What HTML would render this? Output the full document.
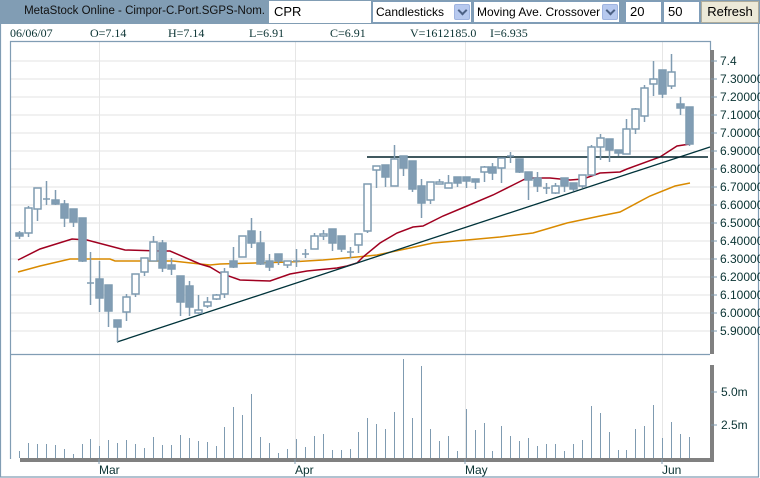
<!DOCTYPE html>
<html><head><meta charset="utf-8"><style>
*{margin:0;padding:0;box-sizing:border-box}
body{width:760px;height:478px;background:#fff;position:relative;overflow:hidden;font-family:"Liberation Sans",sans-serif}
.bar{position:absolute;left:0;top:0;width:760px;height:24px;background:#819db4}
.ttl{position:absolute;right:495px;top:5px;font-size:11.5px;color:#111;white-space:nowrap}
.box{position:absolute;top:1px;height:22px;background:#fff;border:1px solid #7f9db9;font-size:13px;padding:2px 4px;color:#000;white-space:nowrap;overflow:hidden}
.sel{font-size:12px;padding:3px 3px}
.arr{position:absolute;right:1px;top:2px;width:16px;height:16px;background:#b7c9ef;border:1px solid #a0b4e0;border-radius:2px}
.arr:after{content:"";position:absolute;left:4px;top:2px;width:5px;height:5px;border-right:2px solid #4d6185;border-bottom:2px solid #4d6185;transform:rotate(45deg)}
.btn{position:absolute;left:701px;top:1px;width:58px;height:22px;background:#ece9d8;border:1px solid #b0ad9c;font-size:13px;text-align:center;padding-top:2px}
.info{position:absolute;top:26px;font-family:"Liberation Serif",serif;font-size:12px;color:#0a3333;white-space:nowrap}
</style></head><body>
<div class="bar"></div>
<div class="ttl">MetaStock Online - Cimpor-C.Port.SGPS-Nom.</div>
<div class="box" style="left:269px;width:102px;border-color:#fff">CPR</div>
<div class="box sel" style="left:372px;width:100px">Candlesticks<div class="arr"></div></div>
<div class="box sel" style="left:473px;width:147px">Moving Ave. Crossover<div class="arr"></div></div>
<div class="box" style="left:625px;width:37px">20</div>
<div class="box" style="left:663px;width:37px">50</div>
<div class="btn">Refresh</div>
<div class="info" style="left:10px">06/06/07</div>
<div class="info" style="left:90px">O=7.14</div>
<div class="info" style="left:168px">H=7.14</div>
<div class="info" style="left:249px">L=6.91</div>
<div class="info" style="left:330px">C=6.91</div>
<div class="info" style="left:410px">V=1612185.0</div>
<div class="info" style="left:490px">I=6.935</div>
<svg id="s" width="760" height="478" style="position:absolute;left:0;top:0" xmlns="http://www.w3.org/2000/svg">
<g stroke="#e3e3e3" stroke-width="1" id="grid"></g>
<g stroke="#e6e6e6" stroke-width="1">
<line x1="99.5" y1="42" x2="99.5" y2="459"/><line x1="295.5" y1="42" x2="295.5" y2="459"/><line x1="465.5" y1="42" x2="465.5" y2="459"/><line x1="662.5" y1="42" x2="662.5" y2="459"/>
</g>
<g fill="none" stroke="#819db4" stroke-width="1.2">
<line x1="0.5" y1="24" x2="0.5" y2="477"/><line x1="758.5" y1="24" x2="758.5" y2="477"/><line x1="0" y1="477" x2="759" y2="477"/>
<polyline points="10.5,459 10.5,41.5 710.5,41.5 710.5,50"/>
<line x1="10" y1="354.5" x2="710" y2="354.5"/>
</g>
<g fill="#808080">
<rect x="710" y="50" width="4" height="304"/><rect x="710" y="365" width="4" height="96"/><rect x="20" y="458" width="694" height="4"/>
</g>
<g id="vol" stroke="#7f9bb1" stroke-width="1"></g>
<polyline fill="none" stroke="#d98a00" stroke-width="1.5" points="18,272 40,266 70,259 110,259 115,261 173,261 200,264 210,265 220,264 290,262 323,260 357,257 377,255 410,248 433,243 467,240 500,237 533,233 567,223 600,216 620,212 650,196 675,186 690,183"/>
<polyline fill="none" stroke="#a00020" stroke-width="1.5" points="18,260 40,249 72,239 87,240 125,250 160,251 170,251 200,264 210,267 220,273 240,280 270,281 290,274 307,271 337,268 347,266 357,263 363,257 380,243 397,233 413,227 423,226 443,216 467,206 493,195 513,185 527,178 550,178 570,180 583,179 600,173 620,172 627,169 660,157 677,146 690,144"/>
<line x1="117" y1="342" x2="710" y2="147" stroke="#00333a" stroke-width="1.3"/>
<line x1="367" y1="157" x2="708" y2="157" stroke="#00222a" stroke-width="1.5"/>
<g id="cd" stroke="#7f9bb1" stroke-width="1.5"></g>
<g font-family="Liberation Sans,sans-serif" font-size="12" fill="#0a3333" id="ax"></g>
<g stroke="#7f9bb1" stroke-width="1"><line x1="711" y1="392" x2="717" y2="392"/><line x1="711" y1="425" x2="717" y2="425"/><line x1="99" y1="459" x2="99" y2="464"/><line x1="295" y1="459" x2="295" y2="464"/><line x1="465" y1="459" x2="465" y2="464"/><line x1="662" y1="459" x2="662" y2="464"/></g>
<g font-family="Liberation Sans,sans-serif" font-size="12" fill="#0a3333">
<text x="721" y="396">5.0m</text><text x="721" y="429">2.5m</text>
<text x="99" y="474">Mar</text><text x="295" y="474">Apr</text><text x="465" y="474">May</text><text x="662" y="474">Jun</text>
<text x="720" y="65">7.4</text><text x="720" y="83">7.30000</text><text x="720" y="101">7.20000</text><text x="720" y="119">7.10000</text><text x="720" y="137">7.00000</text><text x="720" y="155">6.90000</text><text x="720" y="173">6.80000</text><text x="720" y="191">6.70000</text><text x="720" y="209">6.60000</text><text x="720" y="227">6.50000</text><text x="720" y="245">6.40000</text><text x="720" y="263">6.30000</text><text x="720" y="281">6.20000</text><text x="720" y="299">6.10000</text><text x="720" y="317">6.00000</text><text x="720" y="335">5.90000</text>
</g>
</svg>
<script>
var NS="http://www.w3.org/2000/svg";
function el(p,t,a){var e=document.createElementNS(NS,t);for(var k in a)e.setAttribute(k,a[k]);document.getElementById(p).appendChild(e);}
for(var i=0;i<16;i++){var y=61+i*18;el("grid","line",{x1:10,x2:710,y1:y,y2:y});el("ax","line",{x1:711,x2:717,y1:y,y2:y,stroke:"#7f9bb1"});}
var C=[[231,239,233,236,1],[206,237,208,233,0],[188,221,188,209,0],[181,205,199,200,0],[190,205,200,204,1],[200,227,204,218,1],[209,227,209,222,1],[218,262,218,261,1],[252,305,283,284,0],[261,312,279,298,1],[285,327,285,311,1],[320,342,320,327,1],[294,321,297,312,0],[274,297,274,294,0],[258,276,258,272,0],[236,261,242,261,0],[240,272,243,268,1],[258,275,265,269,1],[276,316,276,302,1],[281,316,286,307,1],[295,314,310,313,0],[297,308,302,306,0],[294,300,295,299,0],[268,298,272,294,0],[247,268,261,267,1],[236,257,236,257,0],[218,248,231,243,1],[231,265,243,264,1],[254,271,261,267,1],[254,265,254,261,1],[261,268,261,265,0],[249,267,261,262,0],[249,258,254,255,0],[233,249,236,249,0],[230,240,234,236,0],[229,251,229,243,1],[236,252,236,249,1],[247,258,252,253,0],[234,253,234,245,0],[184,233,184,231,0],[166,188,166,170,0],[165,187,165,177,1],[145,186,159,186,0],[156,176,156,168,1],[161,192,161,189,1],[179,218,186,203,1],[182,204,182,200,0],[179,184,182,184,0],[175,188,183,188,0],[177,187,177,183,1],[177,188,177,181,1],[179,189,179,182,1],[166,182,167,172,0],[163,180,167,173,1],[158,183,158,168,0],[152,163,156,157,0],[159,173,159,172,1],[172,200,172,180,1],[172,192,178,186,1],[183,194,188,189,0],[183,194,186,193,0],[178,192,178,186,1],[183,191,183,189,1],[175,188,175,186,0],[145,175,147,175,0],[134,160,138,147,0],[139,162,139,150,1],[150,156,150,153,1],[119,154,129,154,0],[108,134,109,129,0],[85,122,88,116,0],[61,96,79,84,0],[70,98,70,94,1],[54,89,72,86,0],[97,115,104,108,1],[107,146,107,144,1]];
var V=[451,443,444,444,445,449,454,444,439,446,440,443,440,444,448,437,445,445,435,438,441,442,446,427,407,415,394,437,443,453,449,439,447,436,434,450,450,449,432,418,424,429,412,359,418,366,429,441,436,451,409,430,423,451,426,436,441,438,446,444,444,451,444,440,406,413,432,450,450,429,426,405,438,422,434,437];
for(var i=0;i<76;i++){var x=Math.round(19+i*670/75)+0.5,c=C[i];
el("vol","line",{x1:x,x2:x,y1:V[i],y2:458});
el("cd","line",{x1:x,x2:x,y1:c[0],y2:c[1]});
var h=Math.max(c[3]-c[2],1);
if(c[3]-c[2]<=1){el("cd","line",{x1:x-3.5,x2:x+3.5,y1:c[2],y2:c[2]});}
else el("cd","rect",{x:x-3.5,y:c[2],width:7,height:h,fill:c[4]?"#819db4":"#fff"});}
</script>
</body></html>
